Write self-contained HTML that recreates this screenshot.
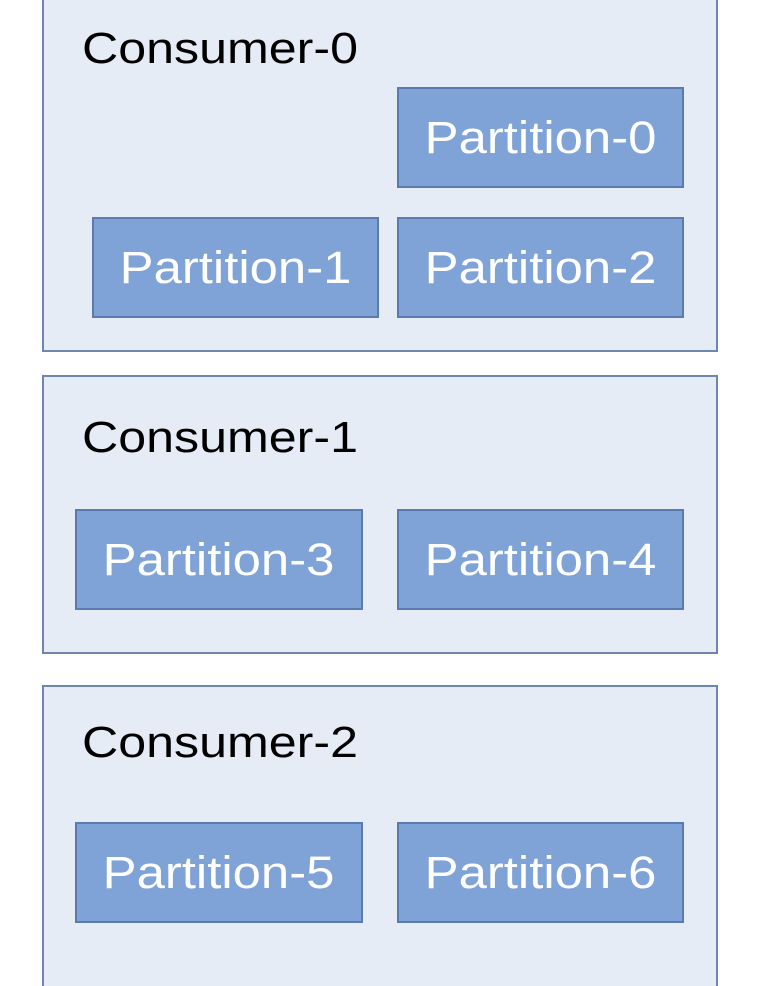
<!DOCTYPE html>
<html><head><style>
html,body{margin:0;width:760px;height:986px;overflow:hidden}
body{background:#fff;position:relative;font-family:"Liberation Sans",sans-serif}
.c{position:absolute;left:42px;width:672px;background:#e6ecf6;border:2px solid #6f86ad}
.t{position:absolute;left:82px;font-size:44px;color:#000;line-height:1;transform:scaleX(1.14);transform-origin:left center}
.p{position:absolute;background:#7fa3d7;border:2px solid #5a7ab0;box-sizing:border-box;color:#fff;font-size:45px;display:flex;align-items:center;justify-content:center;height:101px}
.p span{display:inline-block;transform:scaleX(1.13)}
</style></head><body>
<div class="c" style="top:-4px;height:352px"></div>
<div class="c" style="top:375px;height:275px"></div>
<div class="c" style="top:685px;height:320px"></div>
<div class="t" style="top:27px">Consumer-0</div>
<div class="t" style="top:416px">Consumer-1</div>
<div class="t" style="top:721px">Consumer-2</div>
<div class="p" style="left:397px;top:87px;width:287px"><span>Partition-0</span></div>
<div class="p" style="left:92px;top:217px;width:287px"><span>Partition-1</span></div>
<div class="p" style="left:397px;top:217px;width:287px"><span>Partition-2</span></div>
<div class="p" style="left:75px;top:509px;width:288px"><span>Partition-3</span></div>
<div class="p" style="left:397px;top:509px;width:287px"><span>Partition-4</span></div>
<div class="p" style="left:75px;top:822px;width:288px"><span>Partition-5</span></div>
<div class="p" style="left:397px;top:822px;width:287px"><span>Partition-6</span></div>
</body></html>
